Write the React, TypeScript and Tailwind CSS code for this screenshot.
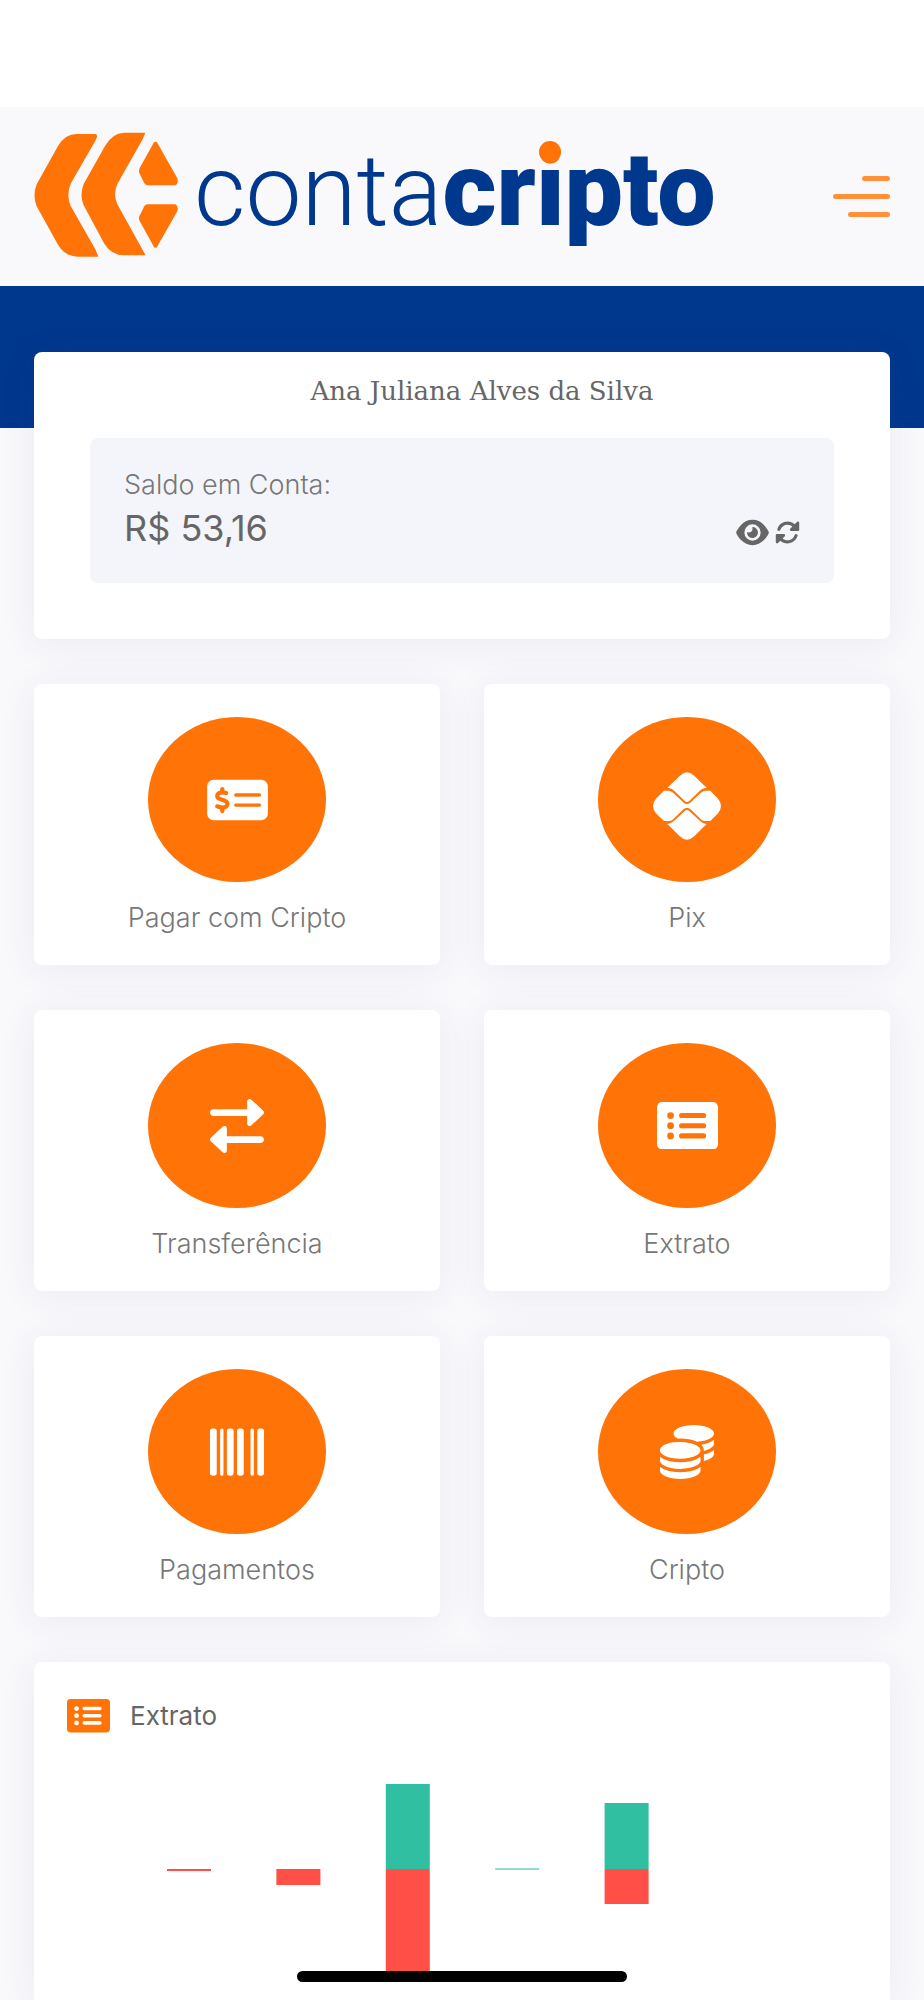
import React from 'react';
import { FaCoins, FaEye, FaMoneyCheckDollar } from 'react-icons/fa6';

interface Shortcut {
  id: string;
  label: string;
  icon: React.ReactNode;
}

interface Movement {
  day: number;
  income: number;
  outcome: number;
  faded?: boolean;
}

function ListIcon({ className }: { className: string }) {
  return (
    <svg viewBox="0 32 576 448" className={className} fill="currentColor" aria-hidden="true">
      <path
        fillRule="evenodd"
        d="M48 32H528a48 48 0 0 1 48 48V432a48 48 0 0 1-48 48H48a48 48 0 0 1-48-48V80a48 48 0 0 1 48-48z
        M128 128a32 32 0 1 0 0 64a32 32 0 1 0 0-64z M128 224a32 32 0 1 0 0 64a32 32 0 1 0 0-64z M128 320a32 32 0 1 0 0 64a32 32 0 1 0 0-64z
        M232 136a24 24 0 0 0 0 48H440a24 24 0 0 0 0-48z M232 232a24 24 0 0 0 0 48H440a24 24 0 0 0 0-48z M232 328a24 24 0 0 0 0 48H440a24 24 0 0 0 0-48z"
      />
    </svg>
  );
}

function PixIcon() {
  return (
    <svg viewBox="0 0 203 203" className="mt-3 size-[68px]" fill="currentColor" aria-hidden="true">
      <path d="M43 47L80 11Q101 -10 123 11L160 47C151 48 145 51 139 57L109 86Q101 93 94 86L64 57C58 51 52 48 43 47z" />
      <path d="M33 56H45C52 56 57 59 61 63L91 91Q101 100 112 91L142 63C146 59 151 56 158 56H171L193 78Q213 101 193 125L171 146H158C151 146 146 144 142 140L112 111Q101 102 91 111L61 140C57 144 52 146 45 146H33L10 125Q-10 101 10 78z" />
      <path d="M43 155L80 192Q101 213 123 192L160 155C151 154 145 151 139 145L109 117Q101 110 94 117L64 145C58 151 52 154 43 155z" />
    </svg>
  );
}

function TransferIcon() {
  return (
    <svg viewBox="0 0 512 512" className="size-[54px]" fill="currentColor" aria-hidden="true">
      <path d="M32 160h319.9l.0791 72c0 9.547 5.652 18.19 14.41 22c8.754 3.812 18.95 2.077 25.93-4.406l112-104c10.24-9.5 10.24-25.69 0-35.19l-112-104c-6.992-6.484-17.18-8.217-25.94-4.404c-8.758 3.812-14.41 12.45-14.41 22L351.9 96H32C14.31 96 0 110.3 0 127.1S14.31 160 32 160z" />
      <path d="M480 352H160.1L160 279.1c0-9.547-5.652-18.19-14.41-22C136.9 254.2 126.7 255.9 119.7 262.4l-112 104c-10.24 9.5-10.24 25.69 0 35.19l112 104c6.992 6.484 17.18 8.219 25.94 4.406C154.4 506.2 160 497.5 160 488L160.1 416H480c17.69 0 32-14.31 32-32S497.7 352 480 352z" />
    </svg>
  );
}

function BarcodeIcon() {
  return (
    <svg viewBox="0 0 512 512" className="size-[54px]" fill="currentColor" aria-hidden="true">
      <rect x="0" y="32" width="64" height="448" rx="24" />
      <rect x="96" y="32" width="32" height="448" rx="16" />
      <rect x="160" y="32" width="64" height="448" rx="24" />
      <rect x="256" y="32" width="64" height="448" rx="24" />
      <rect x="384" y="32" width="32" height="448" rx="16" />
      <rect x="448" y="32" width="64" height="448" rx="24" />
    </svg>
  );
}

function RefreshIcon() {
  return (
    <svg viewBox="0 0 512 512" className="size-[25px]" fill="currentColor" aria-hidden="true">
      <path d="M449.9 39.96l-48.5 48.53C362.5 53.19 311.4 32 256 32C161.5 32 78.59 92.34 49.58 182.2c-5.438 16.81 3.797 34.88 20.61 40.28c16.97 5.5 34.86-3.812 40.3-20.59C130.9 138.5 189.4 96 256 96c37.96 0 73 14.18 100.2 37.8L311.1 178C295.1 194.8 306.8 223.4 330.4 224h146.9C487.7 223.7 496 215.3 496 204.9V59.04C496 34.99 466.9 22.95 449.9 39.96z" />
      <path d="M441.8 289.6c-16.94-5.438-34.88 3.812-40.3 20.59C381.1 373.5 322.6 416 256 416c-37.96 0-73-14.18-100.2-37.8L200 334C216.9 317.2 205.2 288.6 181.6 288H34.66C24.32 288.3 16 296.6 16 307.1v145.9c0 24.04 29.07 36.08 46.07 19.07l48.5-48.53C149.5 458.8 200.6 480 255.1 480c94.45 0 177.4-60.34 206.4-150.2C467.9 313 458.6 294.1 441.8 289.6z" />
    </svg>
  );
}

const SHORTCUTS: Shortcut[] = [
  { id: 'pay', label: 'Pagar com Cripto', icon: <FaMoneyCheckDollar className="h-[54px] w-[61px]" /> },
  { id: 'pix', label: 'Pix', icon: <PixIcon /> },
  { id: 'transfer', label: 'Transferência', icon: <TransferIcon /> },
  { id: 'statement', label: 'Extrato', icon: <ListIcon className="w-[61px]" /> },
  { id: 'bills', label: 'Pagamentos', icon: <BarcodeIcon /> },
  { id: 'crypto', label: 'Cripto', icon: <FaCoins className="size-[54px]" /> },
];

const MOVEMENTS: Movement[] = [
  { day: 1, income: 0, outcome: 2 },
  { day: 2, income: 0, outcome: 16 },
  { day: 3, income: 85, outcome: 106 },
  { day: 4, income: 1, outcome: 1, faded: true },
  { day: 5, income: 66, outcome: 35 },
];

const BASELINE = 85;

function Logo() {
  return (
    <a href="#" className="flex items-center gap-4 pb-1">
      <svg viewBox="0 0 432 376" className="w-36 shrink-0" fill="#ff7307" aria-hidden="true">
        <path d="M128 6H184Q190 6 189 15L184 26L110 155Q96 189 110 222L184 352L193 374H130Q92 372 72 338L8 223Q-5 190 8 157L72 42Q93 6 128 6z" />
        <path d="M270 2H334L326 22L250 156Q236 188 250 217L334 368V370H270Q232 369 211 335L149 220Q136 189 149 156L213 42Q234 4 270 2z" />
        <path d="M360 31Q364 27 369 31L430 139Q434 156 424 160H342Q335 160 331 154L316 123Q314 117 317 108z" />
        <path d="M360 345Q364 350 369 345L430 238Q434 221 424 217H342Q335 217 331 223L316 253Q314 260 317 267z" />
      </svg>
      <span className="pb-2 font-[Roboto,sans-serif] text-[100px] leading-[100px] whitespace-nowrap text-[#00388d]">
        <span className="font-light">conta</span>
        <span className="text-[104px] font-black">
          cr
          {/* the i carries the orange dot */}
          <span className="relative bg-[linear-gradient(#ff7307_30%,#00388d_30%)] bg-clip-text text-transparent">
            i
            <span className="absolute top-3 left-1/2 size-[22px] -translate-x-1/2 rounded-full bg-[#ff7307]" />
          </span>
          pto
        </span>
      </span>
    </a>
  );
}

function Chart() {
  return (
    <svg viewBox="0 0 856 200" className="mt-[46px] w-full" role="img" aria-label="Extrato">
      {MOVEMENTS.map((item, index) => {
        const x = 133 + index * 109.4;
        return (
          <g key={item.day} opacity={item.faded ? 0.5 : 1}>
            <rect x={x} y={BASELINE - item.income} width="44" height={item.income} fill="#31bfa2" />
            <rect x={x} y={BASELINE} width="44" height={item.outcome} fill="#ff4f47" />
          </g>
        );
      })}
    </svg>
  );
}

export default function App() {
  return (
    <div className="flex min-h-screen flex-col bg-[#f9f9fc] font-[Inter,sans-serif] text-[#666666]">
      <div className="h-[107px] bg-white" />

      <header className="flex h-[179px] items-center justify-between px-[34px]">
        <Logo />
        <button type="button" aria-label="Menu" className="flex flex-col items-end gap-[13px]">
          <span className="h-[5px] w-7 rounded-full bg-[#ff9238]" />
          <span className="h-[5px] w-[57px] rounded-full bg-[#ff9238]" />
          <span className="h-[5px] w-[42px] rounded-full bg-[#ff9238]" />
        </button>
      </header>

      <div className="h-[142px] bg-[#00388d]" />

      <main className="-mt-[76px] flex flex-1 flex-col gap-[45px] px-[34px]">
        {/* Account balance */}
        <section className="rounded-lg bg-white px-14 pb-14 shadow-[0_4px_36px_rgba(60,50,110,0.08)]">
          <h1 className="pt-[14px] pb-[22px] pl-10 text-center font-['DejaVu_Serif',serif] text-[26px] leading-[50px]">
            Ana Juliana Alves da Silva
          </h1>
          <div className="flex items-end justify-between rounded-lg bg-[#f4f5fa] px-[34px] pt-[27px] pb-8">
            <div>
              <p className="text-[27px] leading-10 font-light text-[#777777]">Saldo em Conta:</p>
              <p className="text-[36px] leading-[46px]">R$ 53,16</p>
            </div>
            <div className="flex items-center gap-[6px] pb-1">
              <button type="button" aria-label="Mostrar saldo">
                <FaEye className="h-[29px] w-[33px]" />
              </button>
              <button type="button" aria-label="Atualizar saldo">
                <RefreshIcon />
              </button>
            </div>
          </div>
        </section>

        {/* Shortcuts */}
        <nav className="grid grid-cols-2 gap-x-11 gap-y-[45px]">
          {SHORTCUTS.map((item) => (
            <a
              key={item.id}
              href={`#${item.id}`}
              className="flex flex-col items-center rounded-lg bg-white pt-[33px] pb-[27px] shadow-[0_4px_36px_rgba(60,50,110,0.08)]"
            >
              <span className="flex h-[165px] w-[178px] items-center justify-center rounded-[50%] bg-[#ff7307] text-white">
                {item.icon}
              </span>
              <span className="mt-4 text-[27px] leading-10 font-light text-[#777777]">{item.label}</span>
            </a>
          ))}
        </nav>

        {/* Statement */}
        <section className="flex-1 rounded-t-lg bg-white pt-8 shadow-[0_4px_36px_rgba(60,50,110,0.08)]">
          <h2 className="flex items-center gap-5 px-[33px] text-[26px] leading-[44px]">
            <ListIcon className="w-[43px] text-[#ff7307]" />
            Extrato
          </h2>
          <Chart />
        </section>
      </main>

      <div className="fixed bottom-[18px] left-1/2 h-[11px] w-[330px] -translate-x-1/2 rounded-full bg-black" />
    </div>
  );
}
